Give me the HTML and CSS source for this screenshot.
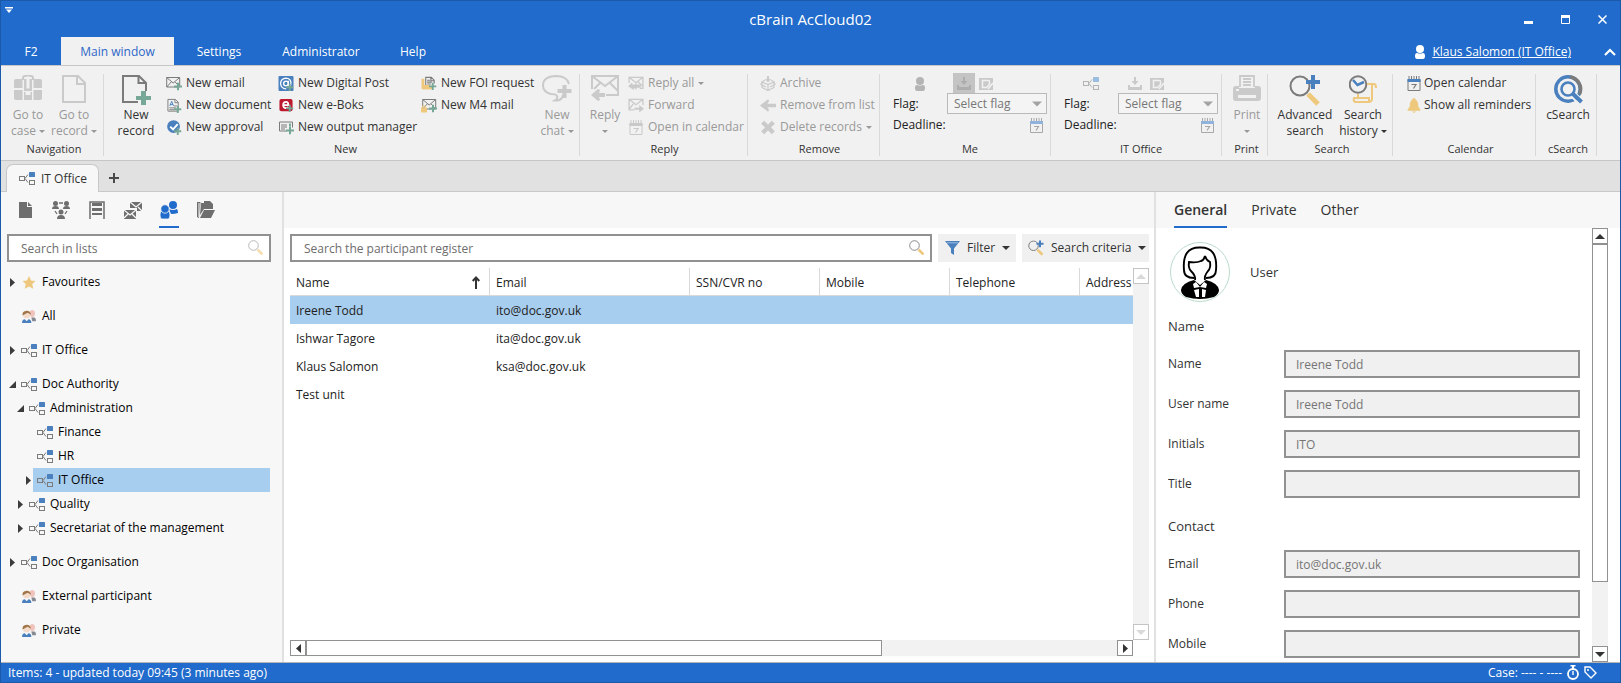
FILE: index.html
```html
<!DOCTYPE html>
<html lang="en">
<head>
<meta charset="utf-8">
<title>cBrain AcCloud02</title>
<link rel="stylesheet" href="styles.css">
</head>
<body>
<svg class="defs" aria-hidden="true">
  <symbol id="plus" viewBox="0 0 8 8"><path d="M3 0h2v3h3v2H5v3H3V5H0V3h3z" fill="var(--green)"/></symbol>
  <symbol id="org" viewBox="0 0 16 13"><g fill="none" stroke="var(--ink)"><rect x=".5" y="4.500" width="5" height="4"/><rect x="10.500" y="8.500" width="5" height="4"/><path d="M9 2.500 6 6.500 9 10.500"/></g><rect x="10" width="6" height="5" rx=".5" fill="var(--blue)"/></symbol>
  <symbol id="case" viewBox="0 0 28 26"><path d="M9 5V3q0-2 2-2h6q2 0 2 2v2" fill="none" stroke="currentColor" stroke-width="2"/><path d="M2 4h6.500v9H0V6q0-2 2-2zM19.500 4H26q2 0 2 2v7h-8.500zM0 15h8.500v10H2q-2 0-2-2zM28 15h-8.500v10H26q2 0 2-2zM10 4h8v12h-8z" fill="currentColor"/><path d="M12.500 1.500h3v12h-3z" fill="#f1f1f1"/><path d="M10 17h1.500v3h5v-3H18v8h-8z" fill="currentColor"/><path d="M12 17h4v2.500h-4z" fill="#f1f1f1"/></symbol>
  <symbol id="page" viewBox="0 0 24 28"><path d="M1 1h15l7 7v19H1z" fill="none" stroke="currentColor" stroke-width="2"/><path d="M15 1v8h8" fill="none" stroke="currentColor" stroke-width="2"/></symbol>
  <symbol id="newpage" viewBox="0 0 29 30"><path d="M16 27H1V1h16l7 7v8" fill="none" stroke="#7b7b7b" stroke-width="2"/><path d="M16.500 1v7H24" fill="none" stroke="#7b7b7b" stroke-width="2"/><path d="M19 16h5v5h5v4h-5v5h-5v-5h-5v-4h5z" fill="var(--green)"/></symbol>
  <symbol id="mail" viewBox="0 0 16 14"><path d="M.7 1h13v9.500H.7zM.7 1l6.500 5.500L13.700 1M.7 10.500l4.500-5M13.700 10.500l-4.500-5" fill="none" stroke="var(--ink)"/></symbol>
  <symbol id="newmail" viewBox="0 0 16 14"><use href="#mail" width="16" height="14"/><use href="#plus" x="8" y="6" width="8" height="8"/></symbol>
  <symbol id="newdoc" viewBox="0 0 16 16"><path d="M1.500 1.500h8l3 3V14h-11z" fill="none" stroke="var(--ink)"/><path d="M9 1.500V5h3.500M3 10.500h7M3 12.500h5M8 8.500h3" fill="none" stroke="var(--ink)"/><path d="M3.500 8.500 5.500 3.500l2 5M4.300 7h2.500" fill="none" stroke="var(--blue)"/><use href="#plus" x="8" y="8" width="8" height="8"/></symbol>
  <symbol id="approve" viewBox="0 0 16 16"><circle cx="7.500" cy="7" r="6.800" fill="var(--blue)"/><path d="m4 7 3 3 5-5.500" fill="none" stroke="#fff" stroke-width="2"/><use href="#plus" x="8" y="8" width="8" height="8"/></symbol>
  <symbol id="post" viewBox="0 0 16 16"><rect width="16" height="16" rx="1" fill="var(--blue)"/><circle cx="8" cy="8" r="2.500" fill="none" stroke="#fff" stroke-width="1.500"/><path d="M10.500 5v4.500q1 2 2.500 0Q14.500 3 8 2.200 2.500 2.500 2.200 8q.5 5.500 6 5.700" fill="none" stroke="#fff" stroke-width="1.400"/><use href="#plus" x="8" y="8" width="8" height="8"/></symbol>
  <symbol id="boks" viewBox="0 0 16 16"><rect x="1" y="1" width="14" height="13" rx="2" fill="#bd1a30"/><path d="M5 7.500h5.500Q10.500 4.200 8 4.200 5 4.200 5 7.500q0 3.300 3 3.300 1.500 0 2.500-1" fill="none" stroke="#fff" stroke-width="1.900"/><use href="#plus" x="8" y="7" width="8" height="8"/></symbol>
  <symbol id="output" viewBox="0 0 16 14"><path d="M9 10.500H1.500v-9h13V7M3 4.500h6M3 6.500h6M3 8.500h4" fill="none" stroke="var(--ink)"/><path d="M11 3h2v3h-2z" fill="var(--green)"/><use href="#plus" x="8" y="6" width="8" height="8"/></symbol>
  <symbol id="foi" viewBox="0 0 16 16"><path d="M0 3h3v8l9-1v4H1q-1 0-1-1z" fill="#eec87d"/><path d="M4.500 10V1.500h6l3 3V8M6 4.500h3M6 6.500h5M6 8.500h4M10 1v4h3" fill="none" stroke="var(--ink)" stroke-width="1.200"/><path d="m3 9.500 6 0 .5 4.500H1z" fill="#eec87d"/><use href="#plus" x="8" y="7" width="8" height="8"/></symbol>
  <symbol id="m4" viewBox="0 0 16 14"><use href="#mail" x="1" width="16" height="14"/><path d="M0 9h6v5H0z" fill="#eec87d"/><path d="M1.500 9V7.500h3V9" fill="none" stroke="#eec87d"/><use href="#plus" x="8" y="6" width="8" height="8"/></symbol>
  <symbol id="chat" viewBox="0 0 30 27"><path d="M27 9Q25 1 14 1 1 1.500 1 10.500 1 17 9 19q5 0 6 2 1 3-2 4.500 7 .5 8-5.500" fill="none" stroke="currentColor" stroke-width="2"/><path d="M20.500 10h4v4h5v4h-5v5h-4v-5h-5v-4h5z" fill="currentColor"/></symbol>
  <symbol id="reply" viewBox="0 0 28 26"><path d="M1 14V1h26v19H15M1 1l13 10L27 1M9 8 3 14M19 8l8 8" fill="none" stroke="currentColor" stroke-width="2"/><path d="m0 20 7-6 2 1-1 3h6v4H8l1 3-2 1z" fill="currentColor"/></symbol>
  <symbol id="replyall" viewBox="0 0 15 13"><path d="M1 6V.7h13V11h-3M1 .7l6.500 5L14 .7M9.500 5 14 9" fill="none" stroke="currentColor" stroke-width="1.200"/><path d="m0 9 4-3.500v2h2.500L8 5.500v2h4v3H8v2L5.500 10.500v2z" fill="currentColor"/></symbol>
  <symbol id="forward" viewBox="0 0 15 13"><path d="M6 10.500H1V.7h13V6M1 .7l6.500 5L14 .7M1 10 5 5" fill="none" stroke="currentColor" stroke-width="1.200"/><path d="M6 8.500h4.500V6L15 9.500 10.500 13v-2.500H6z" fill="currentColor"/></symbol>
  <symbol id="cal" viewBox="0 0 13 15"><path d="M.5 3.500h12v11H.5z" fill="none" stroke="var(--ink)"/><path d="M0 3h13v3H0z" fill="var(--blue)"/><path d="M1.500 0v3M4 0v3M6.500 0v3M9 0v3M11.500 0v3" stroke="var(--ink)"/><path d="M4 8.500h4.500L6 12.500" fill="none" stroke="var(--ink)" stroke-width="1.200"/></symbol>
  <symbol id="archive" viewBox="0 0 14 15"><path d="m1 6 6 2.500L13 6v5.500L7 14.500l-6-3zM7 8.500v6M1 6 0 8.500 5 11M13 6l1 2.500L9 11M1 6l3-2M13 6l-3-2" fill="none" stroke="currentColor" stroke-width="1.200"/><path d="M6 0h2v3h2L7 6.500 4 3h2z" fill="currentColor"/></symbol>
  <symbol id="left" viewBox="0 0 14 12"><path d="m0 6 7-5.500L8 2 6.500 4.500H14v3H6.500L8 10l-1 1.500z" fill="currentColor"/></symbol>
  <symbol id="cross" viewBox="0 0 14 14"><path d="m2 2 10 10M12 2 2 12" stroke="currentColor" stroke-width="4"/></symbol>
  <symbol id="person" viewBox="0 0 10 14"><circle cx="5" cy="4" r="4" fill="currentColor"/><path d="M0 11q0-3 2-3 3 1 6 0 2 0 2 3 0 3-2 3H2q-2 0-2-3z" fill="currentColor"/></symbol>
  <symbol id="inbox" viewBox="0 0 14 13"><path d="M0 8h2v2h10V8h2v5H0zM6 0h2v4h2.500L7 8 3.500 4H6z" fill="currentColor"/></symbol>
  <symbol id="edit" viewBox="0 0 14 12"><path d="M0 0h14v12H0z" fill="currentColor"/><path d="M3.500 2.500h6q1 0 1 1v3l-3 3h-4zM9 11l5-6" fill="none" stroke="#f1f1f1" stroke-width="1.500"/></symbol>
  <symbol id="print" viewBox="0 0 28 26"><path d="M7 12V1h14v11M10 4h8M10 7h8M10 10h8" fill="none" stroke="currentColor" stroke-width="1.800"/><path d="M3 11h3v2h16v-2h3q3 0 3 3v9q0 3-3 3H3q-3 0-3-3v-9q0-3 3-3z" fill="currentColor"/><path d="M5 20h18v3H5zM3 14h3v2H3z" fill="#f1f1f1"/></symbol>
  <symbol id="lens" viewBox="0 0 15 15"><circle cx="5.500" cy="5.500" r="4.800" fill="none" stroke="#8a8a8a"/><path d="m9.500 9.500 5 5" stroke="#eec87d" stroke-width="2.600"/></symbol>
  <symbol id="advlens" viewBox="0 0 32 31"><circle cx="11" cy="11" r="9.500" fill="none" stroke="#7b7b7b" stroke-width="2"/><path d="m19 19 10 10" stroke="#eec87d" stroke-width="5"/><path d="M22 0h4v5h5v4h-5v5h-4V9h-5V5h5z" fill="var(--blue)"/></symbol>
  <symbol id="history" viewBox="0 0 28 29"><circle cx="9" cy="9.500" r="8.300" fill="none" stroke="#7b7b7b" stroke-width="2"/><path d="m4 5 4.500 5L15 7" fill="none" stroke="var(--blue)" stroke-width="2.500"/><path d="M18 9h7q2 0 2 4M23 9v15q0 3-4 3H6q-2-1-1-4h15v4M9 22v-3" fill="none" stroke="#eec87d" stroke-width="2"/></symbol>
  <symbol id="bell" viewBox="0 0 12 14"><path d="M6 0q1.500 0 1.500 1.500Q10 3 10 8l2 3v1H0v-1l2-3q0-5 2.500-6.500Q4.500 0 6 0zM4 12.500h4L6 14z" fill="#eec87d"/></symbol>
  <symbol id="csearch" viewBox="0 0 29 29"><circle cx="14" cy="14" r="12.200" fill="none" stroke="var(--blue)" stroke-width="3.500"/><path d="M16 1.900A12.200 12.200 0 0 1 25.500 19" fill="none" stroke="#7b7b7b" stroke-width="3.500"/><circle cx="14" cy="14" r="6.500" fill="none" stroke="var(--blue)" stroke-width="2.600"/><path d="m22 19 5 5M18 22l5 5" stroke="#f1f1f1" stroke-width="2"/><path d="m18 18 9.500 9" stroke="var(--blue)" stroke-width="4"/></symbol>
  <symbol id="people" viewBox="0 0 15 14"><path d="M8 4Q8 0 11 0t3 4q0 3-3 4-3-1-3-4z" fill="#f0c4bc"/><circle cx="5" cy="5" r="4" fill="#f3dccb"/><path d="M.5 6Q0 1 5 .7 9.500 1 9.500 5L6 3 2 5z" fill="#a0764a"/><path d="M0 14q0-4 3-4l2 2 2-2q3 0 3 4z" fill="var(--blue)"/><path d="M10 8h3q2 0 2 4h-4z" fill="#868b93"/></symbol>
  <symbol id="star" viewBox="0 0 14 14"><path d="m7 0 2.200 4.800 4.800.5-3.500 3.400 1 5L7 11.200l-4.500 2.500 1-5L0 5.300l4.800-.5z" fill="#eec87d"/></symbol>
  <symbol id="closed" viewBox="0 0 5 9"><path d="M0 0 5 4.500 0 9z" fill="#3c3c3c"/></symbol>
  <symbol id="open" viewBox="0 0 7 7"><path d="M7 0v7H0z" fill="#3c3c3c"/></symbol>
  <symbol id="down" viewBox="0 0 8 4"><path d="M0 0h8L4 4z" fill="currentColor"/></symbol>
  <symbol id="up" viewBox="0 0 8 4"><path d="M0 4h8L4 0z" fill="currentColor"/></symbol>
  <symbol id="v-doc" viewBox="0 0 13 16"><path d="M0 0h8v5h5v11H0zM9 0l4 4H9z" fill="currentColor"/></symbol>
  <symbol id="v-team" viewBox="0 0 18 18"><g fill="currentColor"><circle cx="3.500" cy="2.500" r="2.500"/><circle cx="14.500" cy="2.500" r="2.500"/><circle cx="9" cy="11" r="2.500"/><path d="M0 8q0-3 3.500-3T7 8zM11 8q0-3 3.500-3T18 8zM5 18q0-4 4-4t4 4z"/></g><path d="M7 2h4M3 10l2 3M15 10l-2 3" stroke="currentColor" stroke-width="1.300"/></symbol>
  <symbol id="v-shelf" viewBox="0 0 16 18"><path d="M1 18V1h14v17" fill="none" stroke="currentColor" stroke-width="1.500"/><path d="M3 2h10v3H3zM3 7h10v3H3zM3 12h10v2H3z" fill="currentColor"/></symbol>
  <symbol id="v-mails" viewBox="0 0 18 18"><path d="M6 1h12v9h-5V7H6zM0 9h12v9H0z" fill="currentColor"/><path d="m6 1 6 5 6-5M18 10l-4-4M0 9l6 5 6-5M0 17l4-4M12 17l-4-4" fill="none" stroke="#f7f7f7" stroke-width="1.300"/></symbol>
  <symbol id="v-people" viewBox="0 0 18 18"><circle cx="13" cy="4" r="4" fill="currentColor"/><path d="M9 8q4 2 8 0 1 1 1 4-3 1-7 1z" fill="currentColor"/><g fill="currentColor" stroke="#f7f7f7" stroke-width=".8"><path d="M0 14q0-4 2-4 3 1 6 0 2 0 2 4 0 4-2 4H2q-2 0-2-4z"/><circle cx="5" cy="8" r="4.200"/></g></symbol>
  <symbol id="v-folder" viewBox="0 0 19 18"><path d="M4.500 1H1v15l2 1M5 2h3V0h6l3 3v5H8L4 14zM8 9h11l-4 8H4z" fill="currentColor"/><path d="M3 2v14" stroke="#f7f7f7"/></symbol>
  <symbol id="funnel" viewBox="0 0 15 14"><path d="M0 0h15L9 7.500V14l-3-2V7.500z" fill="var(--blue)"/><path d="M2 1.800h11" stroke="#9bbde0"/></symbol>
  <symbol id="sort" viewBox="0 0 8 13"><path d="M4 13V2M.7 5 4 1.500 7.300 5" fill="none" stroke="#333" stroke-width="2"/></symbol>
</svg>

<div class="app">
  <header class="titlebar">
    <button class="quick" aria-label="Customize quick access"><svg width="8" height="6" viewBox="0 0 8 6"><path d="M0 0h8v1.500H0zM1 2.500h6L4 6z" fill="#fff"/></svg></button>
    <h1>cBrain AcCloud02</h1>
    <div class="winbtns">
      <button aria-label="Minimize"><svg width="9" height="10"><path d="M0 7h9v3H0z" fill="#fff"/></svg></button>
      <button aria-label="Maximize"><svg width="9" height="10"><path d="M.5 1v8.500h8V1" fill="none" stroke="#fff"/><path d="M0 1h9v3H0z" fill="#fff"/></svg></button>
      <button aria-label="Close"><svg width="9" height="9"><path d="m.5.500 8 8M8.500.500l-8 8" stroke="#fff" stroke-width="1.500"/></svg></button>
    </div>
  </header>
  <nav class="menubar">
    <button class="m-f2">F2</button>
    <button class="m-main active">Main window</button>
    <button class="m-settings">Settings</button>
    <button class="m-admin">Administrator</button>
    <button class="m-help">Help</button>
    <div class="account"><svg width="10" height="14"><use href="#person"/></svg><a href="#">Klaus Salomon (IT Office)</a></div>
    <button class="collapse" aria-label="Collapse ribbon"><svg width="12" height="8"><path d="m1 7 5-5 5 5" fill="none" stroke="#fff" stroke-width="2.200"/></svg></button>
  </nav>

  <div class="ribbon">
    <section class="group g-nav">
      <div class="tools">
        <button class="big" disabled><svg width="28" height="26"><use href="#case"/></svg><span>Go to<br>case <svg class="dd"><use href="#down"/></svg></span></button>
        <button class="big" disabled><svg width="24" height="28"><use href="#page"/></svg><span>Go to<br>record <svg class="dd"><use href="#down"/></svg></span></button>
      </div>
      <h2>Navigation</h2>
    </section>
    <section class="group g-new">
      <div class="tools">
        <button class="big"><svg width="29" height="30"><use href="#newpage"/></svg><span>New<br>record</span></button>
        <div class="stack">
          <button><svg class="ic"><use href="#newmail"/></svg>New email</button>
          <button><svg class="ic"><use href="#newdoc"/></svg>New document</button>
          <button><svg class="ic"><use href="#approve"/></svg>New approval</button>
        </div>
        <div class="stack">
          <button><svg class="ic"><use href="#post"/></svg>New Digital Post</button>
          <button><svg class="ic"><use href="#boks"/></svg>New e-Boks</button>
          <button><svg class="ic"><use href="#output"/></svg>New output manager</button>
        </div>
        <div class="stack">
          <button><svg class="ic"><use href="#foi"/></svg>New FOI request</button>
          <button><svg class="ic"><use href="#m4"/></svg>New M4 mail</button>
        </div>
        <button class="big" disabled><svg width="30" height="27"><use href="#chat"/></svg><span>New<br>chat <svg class="dd"><use href="#down"/></svg></span></button>
      </div>
      <h2>New</h2>
    </section>
    <section class="group g-reply">
      <div class="tools">
        <button class="big" disabled><svg width="28" height="26"><use href="#reply"/></svg><span>Reply<br><svg class="dd"><use href="#down"/></svg></span></button>
        <div class="stack">
          <button disabled><svg class="ic"><use href="#replyall"/></svg>Reply all <svg class="dd"><use href="#down"/></svg></button>
          <button disabled><svg class="ic"><use href="#forward"/></svg>Forward</button>
          <button disabled><svg class="ic"><use href="#cal"/></svg>Open in calendar</button>
        </div>
      </div>
      <h2>Reply</h2>
    </section>
    <section class="group g-remove">
      <div class="tools">
        <div class="stack">
          <button disabled><svg class="ic"><use href="#archive"/></svg>Archive</button>
          <button disabled><svg class="ic"><use href="#left"/></svg>Remove from list</button>
          <button disabled><svg class="ic"><use href="#cross"/></svg>Delete records <svg class="dd"><use href="#down"/></svg></button>
        </div>
      </div>
      <h2>Remove</h2>
    </section>
    <section class="group g-flag">
      <div class="flags">
        <div class="flagicons"><span class="who"><svg width="10" height="14"><use href="#person"/></svg></span><button class="pressed" disabled aria-label="Inbox"><svg width="14" height="13"><use href="#inbox"/></svg></button><button disabled aria-label="Edit"><svg width="14" height="12"><use href="#edit"/></svg></button></div>
        <label for="flag-me">Flag:</label>
        <div class="pick"><select id="flag-me" disabled><option>Select flag</option></select><svg width="10" height="6"><use href="#down"/></svg></div>
        <span>Deadline:</span>
        <button class="date" aria-label="Deadline for me"><svg width="13" height="15"><use href="#cal"/></svg></button>
      </div>
      <h2>Me</h2>
    </section>
    <section class="group g-flag">
      <div class="flags">
        <div class="flagicons"><span class="who"><svg width="16" height="13"><use href="#org"/></svg></span><button disabled aria-label="Unit inbox"><svg width="14" height="13"><use href="#inbox"/></svg></button><button disabled aria-label="Unit edit"><svg width="14" height="12"><use href="#edit"/></svg></button></div>
        <label for="flag-unit">Flag:</label>
        <div class="pick"><select id="flag-unit" disabled><option>Select flag</option></select><svg width="10" height="6"><use href="#down"/></svg></div>
        <span>Deadline:</span>
        <button class="date" aria-label="Deadline for unit"><svg width="13" height="15"><use href="#cal"/></svg></button>
      </div>
      <h2>IT Office</h2>
    </section>
    <section class="group g-print">
      <div class="tools">
        <button class="big" disabled><svg width="28" height="26"><use href="#print"/></svg><span>Print<br><svg class="dd"><use href="#down"/></svg></span></button>
      </div>
      <h2>Print</h2>
    </section>
    <section class="group g-search">
      <div class="tools">
        <button class="big"><svg width="32" height="31"><use href="#advlens"/></svg><span>Advanced<br>search</span></button>
        <button class="big"><svg width="28" height="29"><use href="#history"/></svg><span>Search<br>history <svg class="dd"><use href="#down"/></svg></span></button>
      </div>
      <h2>Search</h2>
    </section>
    <section class="group g-cal">
      <div class="tools">
        <div class="stack">
          <button><svg class="ic"><use href="#cal"/></svg>Open calendar</button>
          <button><svg class="ic"><use href="#bell"/></svg>Show all reminders</button>
        </div>
      </div>
      <h2>Calendar</h2>
    </section>
    <section class="group g-cs">
      <div class="tools">
        <button class="big"><svg width="29" height="29"><use href="#csearch"/></svg><span>cSearch</span></button>
      </div>
      <h2>cSearch</h2>
    </section>
  </div>

  <div class="tabstrip">
    <button class="doctab"><svg width="16" height="13"><use href="#org"/></svg>IT Office</button>
    <button class="addtab" aria-label="New tab"><svg width="10" height="10"><path d="M5 0v10M0 5h10" stroke="#4a4a4a" stroke-width="2"/></svg></button>
  </div>

  <main class="work">
    <aside class="side">
      <div class="views">
        <button aria-label="Records"><svg width="13" height="16"><use href="#v-doc"/></svg></button>
        <button aria-label="Teams"><svg width="18" height="18"><use href="#v-team"/></svg></button>
        <button aria-label="Archive"><svg width="16" height="18"><use href="#v-shelf"/></svg></button>
        <button aria-label="Mails"><svg width="18" height="18"><use href="#v-mails"/></svg></button>
        <button class="active" aria-label="Participants"><svg width="18" height="18"><use href="#v-people"/></svg></button>
        <button aria-label="Cases"><svg width="19" height="18"><use href="#v-folder"/></svg></button>
      </div>
      <div class="search faded"><input type="text" placeholder="Search in lists" aria-label="Search in lists"><svg width="15" height="15"><use href="#lens"/></svg></div>
      <ul class="tree">
        <li><a href="#"><span class="tw"><svg width="5" height="9"><use href="#closed"/></svg></span><span class="lab"><svg class="ic"><use href="#star"/></svg>Favourites</span></a></li>
        <li><a href="#"><span class="tw"></span><span class="lab"><svg class="ic"><use href="#people"/></svg>All</span></a></li>
        <li><a href="#"><span class="tw"><svg width="5" height="9"><use href="#closed"/></svg></span><span class="lab"><svg class="ic"><use href="#org"/></svg>IT Office</span></a></li>
        <li><a href="#"><span class="tw"><svg width="7" height="7"><use href="#open"/></svg></span><span class="lab"><svg class="ic"><use href="#org"/></svg>Doc Authority</span></a>
          <ul>
            <li><a href="#"><span class="tw"><svg width="7" height="7"><use href="#open"/></svg></span><span class="lab"><svg class="ic"><use href="#org"/></svg>Administration</span></a>
              <ul>
                <li><a href="#"><span class="tw"></span><span class="lab"><svg class="ic"><use href="#org"/></svg>Finance</span></a></li>
                <li><a href="#"><span class="tw"></span><span class="lab"><svg class="ic"><use href="#org"/></svg>HR</span></a></li>
                <li><a href="#"><span class="tw"><svg width="5" height="9"><use href="#closed"/></svg></span><span class="lab picked"><svg class="ic"><use href="#org"/></svg>IT Office</span></a></li>
              </ul>
            </li>
            <li><a href="#"><span class="tw"><svg width="5" height="9"><use href="#closed"/></svg></span><span class="lab"><svg class="ic"><use href="#org"/></svg>Quality</span></a></li>
            <li><a href="#"><span class="tw"><svg width="5" height="9"><use href="#closed"/></svg></span><span class="lab"><svg class="ic"><use href="#org"/></svg>Secretariat of the management</span></a></li>
          </ul>
        </li>
        <li><a href="#"><span class="tw"><svg width="5" height="9"><use href="#closed"/></svg></span><span class="lab"><svg class="ic"><use href="#org"/></svg>Doc Organisation</span></a></li>
        <li><a href="#"><span class="tw"></span><span class="lab"><svg class="ic"><use href="#people"/></svg>External participant</span></a></li>
        <li><a href="#"><span class="tw"></span><span class="lab"><svg class="ic"><use href="#people"/></svg>Private</span></a></li>
      </ul>
    </aside>

    <section class="center">
      <div class="strip"></div>
      <div class="searchrow">
        <div class="search"><input type="text" placeholder="Search the participant register" aria-label="Search the participant register"><svg width="15" height="15"><use href="#lens"/></svg></div>
        <button class="opt"><svg width="15" height="14"><use href="#funnel"/></svg>Filter<svg class="dd"><use href="#down"/></svg></button>
        <button class="opt crit"><svg width="16" height="16" viewBox="0 0 32 31"><use href="#advlens"/></svg>Search criteria<svg class="dd"><use href="#down"/></svg></button>
      </div>
      <div class="listing">
        <div class="tablewrap">
          <table>
            <colgroup><col class="c-wide"><col class="c-wide"><col class="c-mid"><col class="c-mid"><col class="c-mid"><col class="c-wide"></colgroup>
            <thead><tr><th><span class="sorted">Name<svg width="8" height="13"><use href="#sort"/></svg></span></th><th>Email</th><th>SSN/CVR no</th><th>Mobile</th><th>Telephone</th><th>Address</th></tr></thead>
            <tbody>
              <tr class="picked"><td>Ireene Todd</td><td>ito@doc.gov.uk</td><td></td><td></td><td></td><td></td></tr>
              <tr><td>Ishwar Tagore</td><td>ita@doc.gov.uk</td><td></td><td></td><td></td><td></td></tr>
              <tr><td>Klaus Salomon</td><td>ksa@doc.gov.uk</td><td></td><td></td><td></td><td></td></tr>
              <tr><td>Test unit</td><td></td><td></td><td></td><td></td><td></td></tr>
            </tbody>
          </table>
        </div>
        <div class="vbar off"><button aria-label="Scroll up" disabled><svg width="10" height="5"><use href="#up"/></svg></button><button aria-label="Scroll down" disabled><svg width="10" height="5"><use href="#down"/></svg></button></div>
        <div class="hbar"><button aria-label="Scroll left"><svg width="5" height="9"><path d="M5 0 0 4.500 5 9z" fill="#333"/></svg></button><div class="htrack"><div class="hthumb"></div></div><button aria-label="Scroll right"><svg width="5" height="9"><path d="M0 0 5 4.500 0 9z" fill="#333"/></svg></button></div>
      </div>
    </section>

    <aside class="details">
      <div class="dtabs"><button class="active">General</button><button>Private</button><button>Other</button></div>
      <div class="dbody">
        <form class="form">
          <div class="who-card">
            <svg width="60" height="60" viewBox="0 0 60 60"><circle cx="30" cy="30" r="29.500" fill="#fff" stroke="#b9dcc9"/><path d="M24 36q-10 0-10-8Q12 5 30 5.500 48 5 46 28q0 8-10 8" fill="none" stroke="#000" stroke-width="1.900"/><path d="M25 38q1-4-4-9-3-3-2-9 8 1 12-1 3-1 4-5 1 4 5 6 1 6-2 9-4 5-3 9" fill="none" stroke="#000" stroke-width="1.900"/><path d="M24 38q-12 3-13 10 0 4 5 7 14 4 28 0 5-3 5-7-1-7-13-10l-6 5z"/><path d="m23 42 3-2 4 5-6 1zM37 42l-3-2-4 5 6 1zM24 48l5-1v8h-3zM36 48l-4-1v8h3z" fill="#fff"/></svg>
            <span>User</span>
          </div>
          <h3>Name</h3>
          <div class="field"><label for="f1">Name</label><input id="f1" value="Ireene Todd" readonly></div>
          <div class="field"><label for="f2">User name</label><input id="f2" value="Ireene Todd" readonly></div>
          <div class="field"><label for="f3">Initials</label><input id="f3" value="ITO" readonly></div>
          <div class="field"><label for="f4">Title</label><input id="f4" readonly></div>
          <h3>Contact</h3>
          <div class="field"><label for="f5">Email</label><input id="f5" value="ito@doc.gov.uk" readonly></div>
          <div class="field"><label for="f6">Phone</label><input id="f6" readonly></div>
          <div class="field"><label for="f7">Mobile</label><input id="f7" readonly></div>
        </form>
        <div class="vbar"><button aria-label="Scroll details up"><svg width="10" height="5"><use href="#up"/></svg></button><div class="vtrack"><div class="vthumb"></div></div><button aria-label="Scroll details down"><svg width="10" height="5"><use href="#down"/></svg></button></div>
      </div>
    </aside>
  </main>

  <footer class="status">
    <span>Items: 4 - updated today 09:45 (3 minutes ago)</span>
    <span class="casebox">Case: ---- - ----
      <svg width="14" height="15"><circle cx="7" cy="9" r="5" fill="none" stroke="#fff" stroke-width="1.800"/><path d="M4.500 0h5v1.500H8V4H6V1.500H4.500zM6.300 6h1.400v4H6.300z" fill="#fff"/></svg>
      <svg width="13" height="13"><path d="M1 1h5l6 6-5 5-6-6z" fill="none" stroke="#fff" stroke-width="1.400"/><circle cx="4" cy="4" r="1" fill="#fff"/></svg></span>
  </footer>
</div>
</body>
</html>
```
FILE: styles.css
```css
:root { --blue: #4a80bd; --ink: #7b7b7b; --green: #76a797; --brand: #206bcb; --line: #d9d9d9; }
* { box-sizing: border-box; }
body { margin: 0; font: 12px/16px "Open Sans", "Noto Sans", sans-serif; color: #333; }
button, input, select { font: inherit; color: inherit; margin: 0; }
button { padding: 0; border: 0; background: none; }
svg { display: block; flex: none; }
a { color: inherit; text-decoration: none; }
ul { list-style: none; margin: 0; padding: 0; }
h1, h2, h3 { margin: 0; font-weight: 400; }
.defs { position: absolute; width: 0; height: 0; }
.dd { display: inline-block; width: 6px; height: 3px; vertical-align: middle; }

.app { height: 100vh; display: flex; flex-direction: column; overflow: hidden; border: 1px solid #1b5aa9; background: #fff; }

/* Title bar and menu */
.titlebar { display: grid; grid-template-columns: 1fr auto 1fr; height: 36px; background: var(--brand); color: #fff; }
.titlebar h1 { font-size: 15px; line-height: 36px; }
.quick { align-self: start; justify-self: start; padding: 6px 4px; }
.winbtns { display: flex; justify-content: flex-end; align-items: center; gap: 28px; padding-right: 13px; }
.menubar { display: flex; height: 28px; background: var(--brand); color: #fff; }
.menubar button { padding-top: 2px; }
.menubar .m-f2 { width: 60px; }
.menubar .m-main { width: 113px; }
.menubar .m-settings { width: 90px; }
.menubar .m-admin { width: 114px; }
.menubar .m-help { width: 70px; }
.menubar .active { background: #f1f1f1; color: #2e67c8; }
.account { margin-left: auto; display: flex; align-items: center; gap: 7px; padding-top: 2px; }
.account a { text-decoration: underline; }
.menubar .collapse { width: 16px; margin: 0 2px 0 31px; display: grid; place-items: center; }

/* Ribbon */
.ribbon { display: flex; height: 96px; background: #f1f1f1; border-top: 1px solid #c6c6c6; border-bottom: 1px solid #c6c6c6; padding: 8px 0 4px; }
.group { flex: none; display: flex; flex-direction: column; border-right: 1px solid var(--line); }
.group h2 { font-size: 11px; line-height: 14px; text-align: center; }
.tools { display: flex; flex: 1; }
.big { flex: none; display: flex; flex-direction: column; align-items: center; width: 46px; white-space: nowrap; }
.big > svg { margin: 1px 0; }
.big > span { margin-top: auto; height: 35px; }
.stack { display: flex; flex-direction: column; margin-top: -2px; }
.stack button { display: flex; align-items: center; height: 22px; gap: 4px; white-space: nowrap; }
.ic { width: 16px; height: 15px; }
.ribbon button:disabled { color: #999; --ink: #c9c9c9; --blue: #c9c9c9; }
.ribbon button:disabled > svg:first-child { color: #cacaca; }
.g-nav { width: 103px; padding-left: 4px; }
.g-new { width: 476px; padding-left: 8px; }
.g-new .big:first-child { width: 48px; margin-right: 6px; }
.g-new .stack:nth-child(2) { width: 112px; }
.g-new .stack:nth-child(3) { width: 143px; }
.g-new .stack:nth-child(4) { width: 114px; }
.g-new .big:last-child { width: 44px; }
.g-reply { width: 168px; padding-left: 2px; }
.g-remove { width: 132px; padding-left: 12px; }
.g-flag { width: 171px; padding: 0 3px 0 13px; }
.g-print { width: 46px; padding-left: 4px; }
.g-print .big { width: 42px; }
.g-search { width: 125px; padding-left: 4px; }
.g-search .big { width: 66px; }
.g-search .big:last-child { width: 50px; }
.g-cal { width: 143px; padding-left: 13px; }
.g-cal .stack button { gap: 2px; }
.g-cs { width: 61px; padding-left: 4px; }
.g-cs .big { width: 56px; }
.flags { flex: 1; display: grid; grid-template-columns: 54px 100px; grid-template-rows: 19px 21px 22px; align-items: center; color: #222; }
.flagicons { grid-column: 1 / 3; display: flex; align-items: center; height: 19px; }
.flagicons .who { width: 60px; display: grid; place-items: center; padding-right: 6px; color: #b4b4b4; --ink: #b4b4b4; --blue: #9bbde0; }
.flagicons button { width: 22px; height: 22px; display: grid; place-items: center; }
.flagicons .pressed { background: #c4c4c4; }
.ribbon .flagicons .pressed:disabled > svg { color: #adadad; }
.pick { position: relative; height: 21px; }
.pick select { appearance: none; width: 100%; height: 21px; padding: 0 6px; border: 1px solid #bababa; border-radius: 0; background: #f4f4f4; color: #777; opacity: 1; }
.pick svg { position: absolute; right: 5px; top: 8px; color: #a3a3a3; }
.date { justify-self: end; padding-right: 4px; --ink: #a8a8a8; --blue: #8fb3da; }

/* Document tabs */
.tabstrip { display: flex; align-items: flex-end; height: 31px; padding-left: 5px; background: #e1e1e1; border-bottom: 1px solid #c8c8c8; }
.doctab { display: flex; align-items: center; gap: 6px; width: 93px; height: 28px; margin-bottom: -1px; padding-left: 12px; background: #f7f7f7; border: 1px solid #c8c8c8; border-bottom: 0; border-radius: 7px 7px 0 0; white-space: nowrap; }
.addtab { width: 30px; height: 27px; display: grid; place-items: center; }

/* Work area */
.work { flex: 1; min-height: 0; display: grid; grid-template-columns: 283px minmax(0, 1fr) 464px; }
.side { background: #f7f7f7; border-right: 2px solid #e1e1e1; padding-left: 6px; }
.views { display: flex; height: 42px; padding-left: 3px; gap: 6px; color: #6e6e6e; }
.views button { width: 30px; height: 36px; display: grid; place-items: center; }
.views .active { color: var(--brand); background: linear-gradient(var(--brand), var(--brand)) center bottom / 20px 2px no-repeat; }
.search { position: relative; height: 28px; }
.search input { width: 100%; height: 28px; padding: 0 36px 0 12px; border: 2px solid #919191; border-radius: 0; background: #fff; outline: 0; }
.search input::placeholder { color: #6d6d6d; opacity: 1; }
.search svg { position: absolute; right: 8px; top: 6px; }
.side .search { width: 264px; }
.faded svg { opacity: .6; }
.tree { padding-top: 8px; width: 263px; color: #000; }
.tree > li { margin-bottom: 10px; }
.tree a { display: flex; height: 24px; }
.tree ul { padding-left: 8px; }
.tw { width: 10px; display: grid; place-items: center; }
.lab { flex: 1; display: flex; align-items: center; gap: 5px; padding-left: 4px; white-space: nowrap; }
.lab .ic { height: 13px; }
.picked { background: #a7cdef; }

.center { display: flex; flex-direction: column; min-width: 0; border-right: 2px solid #e1e1e1; }
.strip { height: 36px; background: #f7f7f7; }
.searchrow { display: flex; gap: 6px; padding: 6px 5px 6px 6px; }
.searchrow .search { flex: 1; }
.opt { display: flex; align-items: center; gap: 7px; width: 78px; padding-left: 7px; background: #f0f0f0; white-space: nowrap; }
.crit { width: 127px; padding-left: 6px; }
.opt .dd { width: 8px; height: 4px; }
.listing { flex: 1; min-height: 0; display: grid; grid-template-columns: minmax(0, 1fr) 16px; grid-template-rows: minmax(0, 1fr) 16px; padding: 0 5px 6px 6px; }
.tablewrap { overflow: hidden; }
table { table-layout: fixed; width: 990px; border-collapse: separate; border-spacing: 0; color: #222; }
.c-wide { width: 200px; }
.c-mid { width: 130px; }
th, td { height: 28px; padding: 2px 6px 0; text-align: left; font-weight: 400; }
th { border-right: 1px solid var(--line); border-bottom: 1px solid var(--line); }
.sorted { display: flex; justify-content: space-between; align-items: center; padding-right: 3px; }
.vbar { display: flex; flex-direction: column; justify-content: space-between; background: #f2f2f2; color: #333; }
.vbar button, .hbar button { flex: none; width: 16px; height: 16px; display: grid; place-items: center; border: 1px solid #919191; background: #fff; }
.vbar.off button { border-color: #c4c4c4; color: #d9d9d9; }
.hbar { display: flex; background: #f2f2f2; }
.htrack, .vtrack { flex: 1; min-height: 0; }
.hthumb { width: 71%; height: 16px; border: 1px solid #919191; background: #fff; }
.vthumb { width: 16px; height: 84%; border: 1px solid #919191; background: #fff; }

.details { display: flex; flex-direction: column; min-height: 0; }
.dtabs { display: flex; gap: 24px; height: 36px; padding-left: 18px; background: #f7f7f7; font-size: 14px; }
.dtabs .active { font-weight: 600; border-bottom: 2px solid var(--brand); padding-top: 2px; }
.dbody { flex: 1; min-height: 0; display: flex; padding: 0 12px; }
.form { flex: 1; overflow: hidden; padding-top: 14px; }
.who-card { display: flex; align-items: center; gap: 20px; padding: 0 0 8px 2px; font-size: 13px; }
.form h3 { font-size: 13px; line-height: 20px; padding: 6px 0 14px; }
.field { display: flex; align-items: center; margin-bottom: 12px; }
.field label { width: 116px; }
.field input { flex: 1; min-width: 0; height: 28px; padding: 0 10px; border: 2px solid #919191; border-radius: 0; background: #f0f0f0; color: #757575; }
.dbody .vbar { margin-left: 12px; width: 16px; }

.status { display: flex; justify-content: space-between; align-items: center; height: 20px; padding: 0 23px 0 7px; border-top: 1px solid #b5b5b5; background: var(--brand); color: #fff; }
.casebox { display: flex; align-items: center; gap: 4px; }
```
